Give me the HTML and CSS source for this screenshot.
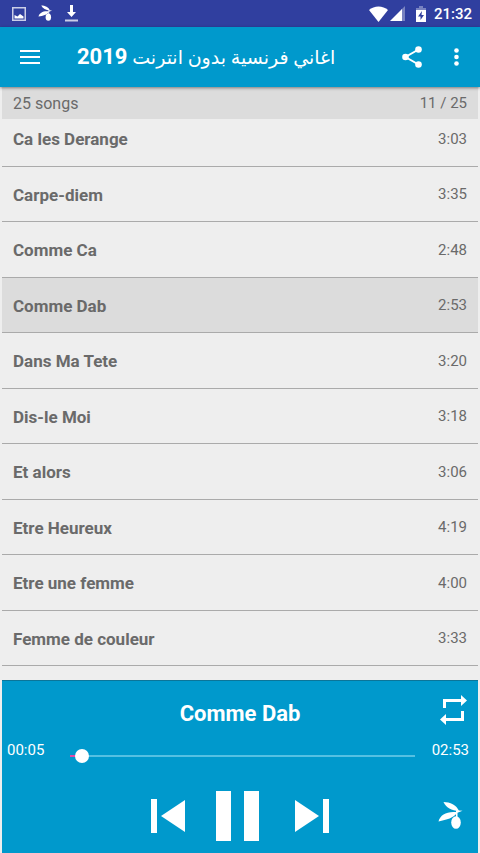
FILE: index.html
```html
<!DOCTYPE html>
<html lang="fr">
<head>
<meta charset="utf-8">
<meta name="viewport" content="width=device-width, initial-scale=1">
<title>اغاني فرنسية بدون انترنت 2019</title>
<link rel="stylesheet" href="styles.css">
</head>
<body>
<svg class="defs" aria-hidden="true">
  <symbol id="olive" viewBox="0 0 26 30">
    <path d="M5.500 1C12 1 18.500 4 21 10 13.500 9.500 8 6.500 5.500 1z"/>
    <path d="M.5 20.500C2.500 13.500 9 10 19.500 11.300 15.500 17.500 9 18.500.5 20.500z"/>
    <path d="M18 9.300l6.500.5-5 2V17H18z"/>
    <ellipse cx="18" cy="21.500" rx="4.800" ry="6.300"/>
  </symbol>
</svg>

<div class="status">
  <div class="status-group notices">
    <svg width="14" height="14" viewBox="0 0 14 14"><path class="faded" fill-rule="evenodd" d="M0 0h14v14H0zM1.500 1.500v11h11v-11z"/><path d="M2.500 11.500V8l3 1.500L8 7l3.500 2.500v2z"/></svg>
    <svg width="15" height="17"><use href="#olive"/></svg>
    <svg width="13" height="17" viewBox="0 0 13 17"><path d="M5 0h3v7h3l-4.500 5L2 7h3z"/><path class="faded" d="M0 14.500h13v2H0z"/></svg>
  </div>
  <div class="status-group">
    <svg width="19" height="16" viewBox="0 0 19 16"><path d="M0 4C5-.8 14-.8 19 4L9.500 16z"/></svg>
    <svg width="16" height="15" viewBox="0 0 16 15"><path class="dim" d="M15 0v15h-4V4z"/><path d="M0 15L12 3v12z"/></svg>
    <svg class="battery" width="10" height="16" viewBox="0 0 10 16"><path class="dim" d="M3 0h4v2h3v3H0V2h3z"/><path fill-rule="evenodd" d="M0 4h10v12H0zM6 5L2 10.500h2.500V14L8 9H5.500z"/></svg>
    <span>21:32</span>
  </div>
</div>

<header class="appbar">
  <button class="icon menu" aria-label="Menu"><svg width="20" height="14" viewBox="0 0 20 14"><path d="M0 0h20v2H0zM0 6h20v2H0zM0 12h20v2H0z"/></svg></button>
  <h1 dir="rtl" lang="ar">اغاني فرنسية بدون انترنت <b>2019</b></h1>
  <button class="icon share" aria-label="Share"><svg width="20" height="22" viewBox="0 0 20 22"><path class="link" d="M16.500 3.500L3.500 11l13 7.500"/><circle cx="16.500" cy="3.500" r="3.300"/><circle cx="3.500" cy="11" r="3.300"/><circle cx="16.500" cy="18.500" r="3.300"/></svg></button>
  <button class="icon more" aria-label="More options"><svg width="5" height="18" viewBox="0 0 5 18"><circle cx="2.500" cy="2.500" r="2.300"/><circle cx="2.500" cy="9" r="2.300"/><circle cx="2.500" cy="15.500" r="2.300"/></svg></button>
</header>

<main class="library">
  <div class="summary"><span>25 songs</span><span class="position">11 / 25</span></div>
  <div class="viewport">
    <ul class="songs">
      <li><span class="name">Ca les Derange</span><span class="time">3:03</span></li>
      <li><span class="name">Carpe-diem</span><span class="time">3:35</span></li>
      <li><span class="name">Comme Ca</span><span class="time">2:48</span></li>
      <li class="current"><span class="name">Comme Dab</span><span class="time">2:53</span></li>
      <li><span class="name">Dans Ma Tete</span><span class="time">3:20</span></li>
      <li><span class="name">Dis-le Moi</span><span class="time">3:18</span></li>
      <li><span class="name">Et alors</span><span class="time">3:06</span></li>
      <li><span class="name">Etre Heureux</span><span class="time">4:19</span></li>
      <li><span class="name">Etre une femme</span><span class="time">4:00</span></li>
      <li><span class="name">Femme de couleur</span><span class="time">3:33</span></li>
    </ul>
  </div>
</main>

<footer class="player">
  <div class="now">
    <h2>Comme Dab</h2>
    <button class="icon" aria-label="Repeat"><svg width="28" height="30" viewBox="0 0 28 30"><path d="M3 4h18V0l6 5.500-6 5.500V7H6v6H3zM24 16v10H6v4l-6-5.500L6 19v4h15v-7z"/></svg></button>
  </div>
  <div class="progress">
    <span>00:05</span>
    <input type="range" min="0" max="173" value="5" aria-label="Position">
    <span>02:53</span>
  </div>
  <div class="controls">
    <div class="transport">
      <button class="icon" aria-label="Previous"><svg width="34" height="34" viewBox="0 0 34 34"><path d="M0 0h6v34H0zM34 1v32L10 17z"/></svg></button>
      <button class="icon" aria-label="Pause"><svg width="43" height="50" viewBox="0 0 43 50"><path d="M0 0h15v50H0zM28 0h15v50H28z"/></svg></button>
      <button class="icon next" aria-label="Next"><svg width="34" height="34" viewBox="0 0 34 34"><path d="M28 0h6v34h-6zM0 1v32l24-16z"/></svg></button>
    </div>
    <button class="icon" aria-label="Olive"><svg width="26" height="30"><use href="#olive"/></svg></button>
  </div>
</footer>
</body>
</html>
```
FILE: styles.css
```css
* { box-sizing: border-box; }

body {
  margin: 0;
  height: 100vh;
  display: flex;
  flex-direction: column;
  overflow: hidden;
  background: #eee;
  color: #6a6a6a;
  font-family: Roboto, "DejaVu Sans", sans-serif;
}

h1, h2, ul { margin: 0; padding: 0; }

svg { display: block; fill: #fff; }

.defs { position: absolute; width: 0; height: 0; }
.faded { opacity: 0.75; }
.dim { opacity: 0.35; }
.link { fill: none; stroke: #fff; stroke-width: 2; }

.icon {
  display: block;
  padding: 0;
  border: 0;
  background: none;
}

.status {
  flex: none;
  display: flex;
  justify-content: space-between;
  height: 27px;
  padding: 0 8px 0 12px;
  background: #303f9f;
  color: #fff;
  font-size: 15px;
  font-weight: 500;
}

.status-group { display: flex; align-items: center; gap: 2px; }
.notices { gap: 12px; }
.battery { margin: 0 6px 0 8px; }

.appbar {
  flex: none;
  z-index: 1;
  display: flex;
  align-items: center;
  height: 60px;
  padding: 0 21px 0 20px;
  background: #0099cc;
  color: #fff;
  box-shadow: 0 1px 3px rgba(0, 0, 0, 0.45);
}

.menu { margin-right: 37px; }

h1 {
  font-family: Roboto, "DejaVu Sans", sans-serif;
  font-size: 19px;
  font-weight: 400;
  line-height: 32px;
  white-space: nowrap;
}

h1 b { font-size: 22px; }

.share { margin-left: auto; }
.more { margin-left: 32px; }

.library {
  flex: 1;
  min-height: 0;
  display: flex;
  flex-direction: column;
  padding: 0 2px;
}

.summary {
  flex: none;
  display: flex;
  align-items: center;
  justify-content: space-between;
  height: 32px;
  padding: 0 11px;
  background: #dcdcdc;
  font-size: 16px;
}

.position { font-size: 15px; }

.viewport {
  flex: 1;
  min-height: 0;
  display: flex;
  flex-direction: column;
  overflow: hidden;
}

/* The list is scrolled slightly past its first row. */
.songs { margin-top: -8px; list-style: none; }

.songs li {
  display: flex;
  align-items: center;
  justify-content: space-between;
  height: 56px;
  padding: 0 11px;
  border-bottom: 1px solid #aaa;
}

.songs li:nth-child(even) { height: 55px; }
.songs .current { background: #dcdcdc; }

.name { padding-top: 1px; font-size: 17px; font-weight: 700; }
.time { font-size: 15px; }

.player {
  flex: none;
  margin: 0 2px;
  padding-bottom: 12px;
  border-top: 1px solid #0b7599;
  background: #0099cc;
  color: #fff;
}

.now {
  display: grid;
  grid-template-columns: 1fr auto 1fr;
  align-items: center;
  padding: 14px 10px 0;
}

h2 {
  grid-column: 2;
  font-size: 22px;
  font-weight: 700;
  line-height: 30px;
  padding-top: 4px;
}

.now .icon { justify-self: end; padding-bottom: 4px; }

.progress {
  display: flex;
  align-items: center;
  padding: 8px 9px 0 5px;
  font-size: 15px;
  line-height: 20px;
}

.progress input {
  flex: 1;
  min-width: 0;
  height: 14px;
  margin: 12px 12px 0 21px;
  appearance: none;
  background:
    linear-gradient(to right, #e04aa8 10px, #55c0e2 10px) center / calc(100% - 10px) 2px no-repeat;
}

.progress input::-webkit-slider-thumb {
  appearance: none;
  width: 14px;
  height: 14px;
  border-radius: 50%;
  background: #fff;
}

.controls {
  display: grid;
  grid-template-columns: 1fr auto 1fr;
  align-items: center;
  padding: 28px 14px 0;
}

.transport {
  grid-column: 2;
  display: flex;
  align-items: center;
  gap: 31px;
}

.next { margin-left: 5px; }

.controls > .icon { justify-self: end; }
```
